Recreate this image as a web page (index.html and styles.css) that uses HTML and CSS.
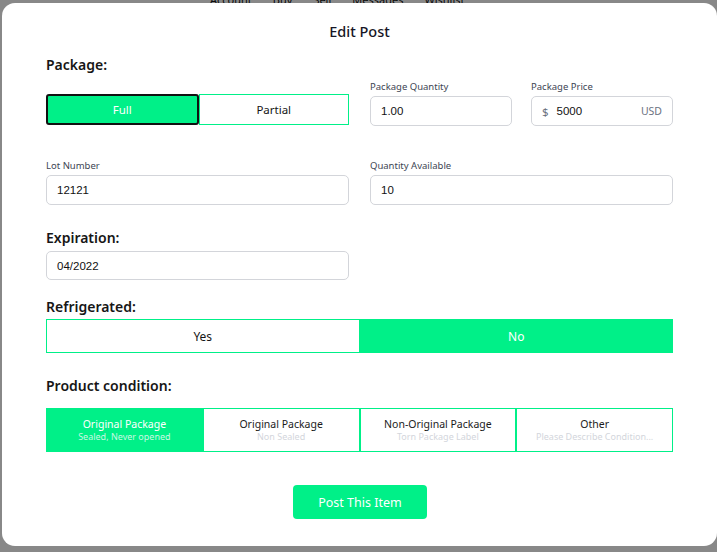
FILE: index.html
```html
<!DOCTYPE html>
<html>
<head>
<meta charset="utf-8">
<link rel="stylesheet" href="styles.css">
</head>
<body>
<div class="page">
  <nav class="topnav">
    <span>Account</span><span>Buy</span><span>Sell</span><span>Messages</span><span>Wishlist</span>
  </nav>
</div>
<div class="overlay">
  <div class="modal">
    <h1 class="title">Edit Post</h1>

    <h2 class="section">Package:</h2>
    <div class="grid row1">
      <div class="seg seg-pkg">
        <button class="segbtn active-dark">Full</button>
        <button class="segbtn">Partial</button>
      </div>
      <div class="pair">
        <label class="field">
          <span class="flabel">Package Quantity</span>
          <span class="input"><span class="val">1.00</span></span>
        </label>
        <label class="field">
          <span class="flabel">Package Price</span>
          <span class="input"><span class="pre">$</span><span class="val">5000</span><span class="suf">USD</span></span>
        </label>
      </div>
    </div>

    <div class="grid row2">
      <label class="field">
        <span class="flabel">Lot Number</span>
        <span class="input"><span class="val">12121</span></span>
      </label>
      <label class="field">
        <span class="flabel">Quantity Available</span>
        <span class="input"><span class="val">10</span></span>
      </label>
    </div>

    <h2 class="section sec-exp">Expiration:</h2>
    <div class="grid">
      <span class="input exp"><span class="val">04/2022</span></span>
    </div>

    <h2 class="section sec-ref">Refrigerated:</h2>
    <div class="toggle">
      <button class="tbtn">Yes</button>
      <button class="tbtn on">No</button>
    </div>

    <h2 class="section sec-cond">Product condition:</h2>
    <div class="cond">
      <button class="cbtn on"><span class="cmain">Original Package</span><span class="csub">Sealed, Never opened</span></button>
      <button class="cbtn"><span class="cmain">Original Package</span><span class="csub">Non Sealed</span></button>
      <button class="cbtn"><span class="cmain">Non-Original Package</span><span class="csub">Torn Package Label</span></button>
      <button class="cbtn"><span class="cmain">Other</span><span class="csub">Please Describe Condition...</span></button>
    </div>

    <div class="actions">
      <button class="post">Post This Item</button>
    </div>
  </div>
</div>
</body>
</html>
```

FILE: styles.css
```css
* { box-sizing: border-box; }
html, body { margin: 0; padding: 0; }
body {
  width: 717px;
  height: 552px;
  overflow: hidden;
  background: #ffffff;
  font-family: "Noto Sans", "Open Sans", sans-serif;
}
.page { height: 552px; }
.topnav {
  display: flex;
  gap: 21px;
  padding-left: 210px;
  margin-top: -7px;
  font-size: 11px;
  line-height: 13px;
  color: #111;
}
.overlay {
  position: fixed;
  inset: 0;
  background: rgba(0, 0, 0, 0.466);
  padding: 3px 0 6px 2px;
  display: flex;
}
.modal {
  flex: 1;
  background: #fff;
  border-radius: 13px;
  padding: 18px 44px 0 44px;
  color: #1a1a1a;
  display: flex;
  flex-direction: column;
}
.title {
  margin: 0;
  text-align: center;
  font-size: 14.5px;
  line-height: 20px;
  font-weight: 500;
  color: #161626;
}
.section {
  margin: 14px 0 0;
  font-size: 14px;
  line-height: 20px;
  font-weight: 600;
  color: #161616;
}
.grid {
  display: grid;
  grid-template-columns: 1fr 1fr;
  column-gap: 21px;
  align-items: end;
}
.row1 { margin-top: 5px; }
.row2 { margin-top: 33px; }
.pair {
  display: grid;
  grid-template-columns: 1fr 1fr;
  column-gap: 19px;
}
.field { display: flex; flex-direction: column; }
.flabel {
  font-size: 9.5px;
  line-height: 13px;
  color: #3d4553;
  margin-bottom: 3px;
}
.input {
  height: 30px;
  border: 1px solid #d3d5da;
  border-radius: 5px;
  display: flex;
  align-items: center;
  padding: 0 10px;
  font-family: "Liberation Sans", Arial, sans-serif;
  font-size: 11.5px;
  color: #111;
}
.input .pre { color: #6b7280; margin-right: 8px; font-family: "Noto Sans", sans-serif; font-size: 11.5px; }
.input .suf { margin-left: auto; color: #6b7280; font-family: "Noto Sans", sans-serif; font-size: 10.5px; }
.input.exp { height: 29px; }

.seg {
  display: flex;
  margin-bottom: 1px;
}
button {
  font-family: "Noto Sans", "Open Sans", sans-serif;
  cursor: pointer;
}
.segbtn {
  flex: 1;
  height: 31px;
  border: 1px solid #00f088;
  background: #fff;
  font-size: 11.5px;
  color: #151515;
  padding: 0;
}
.segbtn.active-dark {
  background: #00f088;
  color: #fff;
  border: 2px solid #111;
  border-radius: 3px;
}

.sec-exp { margin-top: 23px; }
.sec-exp + .grid .input { margin-top: 3px; }
.sec-ref { margin-top: 17px; }
.toggle {
  margin-top: 2px;
  display: flex;
  height: 34px;
}
.tbtn {
  flex: 1;
  border: 1px solid #00f088;
  background: #fff;
  font-size: 12px;
  color: #151515;
  padding: 0;
}
.tbtn.on { background: #00f088; color: #fff; }

.sec-cond { margin-top: 23px; }
.cond {
  margin-top: 12px;
  display: grid;
  grid-template-columns: repeat(4, 1fr);
  height: 44px;
}
.cbtn {
  border: 1px solid #00f088;
  background: #fff;
  padding: 0;
  display: flex;
  flex-direction: column;
  align-items: center;
  justify-content: center;
}
.cmain { font-size: 10.5px; line-height: 14px; color: #1b1b1b; }
.csub { font-size: 9px; line-height: 12px; color: #d3d6dc; }
.cbtn.on { background: #00f088; }
.cbtn.on .cmain { color: #fff; }
.cbtn.on .csub { color: #c9f8e2; }

.actions {
  margin-top: 33px;
  display: flex;
  justify-content: center;
  padding-left: 1px;
}
.post {
  width: 134px;
  height: 34px;
  background: #00f088;
  border: none;
  border-radius: 4px;
  color: #fff;
  font-size: 12.5px;
}
```
